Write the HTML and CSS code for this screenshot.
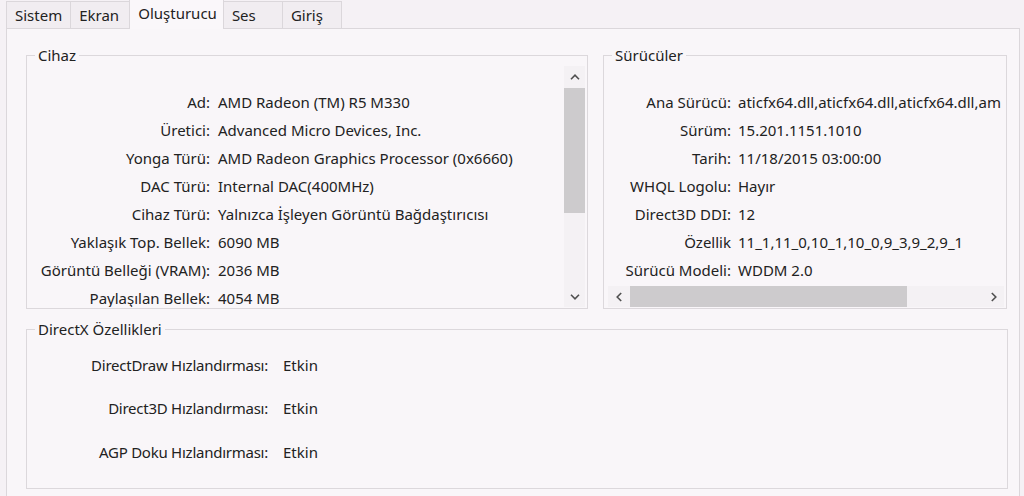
FILE: index.html
```html
<!DOCTYPE html>
<html lang="tr">

<head>
    <meta charset="UTF-8">
    <meta name="viewport" content="width=device-width, initial-scale=1.0">
    <title>DirectX Tanı Aracı</title>
    <link rel="stylesheet" href="styles.css">
</head>

<body>
    <div class="tabs">
        <div class="tab">Sistem</div>
        <div class="tab">Ekran</div>
        <div class="tab active">Oluşturucu</div>
        <div class="tab">Ses</div>
        <div class="tab">Giriş</div>
    </div>

    <div class="page">
        <div class="top-row">
            <fieldset class="group device">
                <legend>Cihaz</legend>
                <div class="scroll-box">
                    <div class="info-grid device-grid">
                        <span class="label">Ad:</span><span>AMD Radeon (TM) R5 M330</span>
                        <span class="label">Üretici:</span><span>Advanced Micro Devices, Inc.</span>
                        <span class="label">Yonga Türü:</span><span>AMD Radeon Graphics Processor (0x6660)</span>
                        <span class="label">DAC Türü:</span><span>Internal DAC(400MHz)</span>
                        <span class="label">Cihaz Türü:</span><span>Yalnızca İşleyen Görüntü Bağdaştırıcısı</span>
                        <span class="label">Yaklaşık Top. Bellek:</span><span>6090 MB</span>
                        <span class="label">Görüntü Belleği (VRAM):</span><span>2036 MB</span>
                        <span class="label">Paylaşılan Bellek:</span><span>4054 MB</span>
                    </div>
                    <div class="vscroll">
                        <div class="sb-btn">
                            <svg width="10" height="6" viewBox="0 0 10 6"><path d="M1 5.2 5 1.2 9 5.2" fill="none" stroke="#505050" stroke-width="1.6"/></svg>
                        </div>
                        <div class="vthumb"></div>
                        <div class="track"></div>
                        <div class="sb-btn">
                            <svg width="10" height="6" viewBox="0 0 10 6"><path d="M1 0.8 5 4.8 9 0.8" fill="none" stroke="#505050" stroke-width="1.6"/></svg>
                        </div>
                    </div>
                </div>
            </fieldset>

            <fieldset class="group drivers">
                <legend>Sürücüler</legend>
                <div class="scroll-box column">
                    <div class="info-grid driver-grid">
                        <span class="label">Ana Sürücü:</span><span>aticfx64.dll,aticfx64.dll,aticfx64.dll,am</span>
                        <span class="label">Sürüm:</span><span>15.201.1151.1010</span>
                        <span class="label">Tarih:</span><span>11/18/2015 03:00:00</span>
                        <span class="label">WHQL Logolu:</span><span>Hayır</span>
                        <span class="label">Direct3D DDI:</span><span>12</span>
                        <span class="label">Özellik</span><span>11_1,11_0,10_1,10_0,9_3,9_2,9_1</span>
                        <span class="label">Sürücü Modeli:</span><span>WDDM 2.0</span>
                    </div>
                    <div class="hscroll">
                        <div class="sb-btn">
                            <svg width="6" height="10" viewBox="0 0 6 10"><path d="M5.2 1 1.2 5 5.2 9" fill="none" stroke="#505050" stroke-width="1.6"/></svg>
                        </div>
                        <div class="hthumb"></div>
                        <div class="track"></div>
                        <div class="sb-btn">
                            <svg width="6" height="10" viewBox="0 0 6 10"><path d="M0.8 1 4.8 5 0.8 9" fill="none" stroke="#505050" stroke-width="1.6"/></svg>
                        </div>
                    </div>
                </div>
            </fieldset>
        </div>

        <fieldset class="group features">
            <legend>DirectX Özellikleri</legend>
            <div class="info-grid feature-grid">
                <span class="label">DirectDraw Hızlandırması:</span><span>Etkin</span>
                <span class="label">Direct3D Hızlandırması:</span><span>Etkin</span>
                <span class="label">AGP Doku Hızlandırması:</span><span>Etkin</span>
            </div>
        </fieldset>
    </div>
</body>
</html>
```

FILE: styles.css
```css
body {
    font-family: "Noto Sans", "Open Sans", sans-serif;
    font-size: 15px;
    color: #222;
    background-color: #f5f1f5;
    margin: 0;
    padding: 0;
    height: 496px;
    overflow: hidden;
}

.tabs {
    display: flex;
    align-items: flex-end;
    height: 28px;
    padding-left: 6px;
}

.tab {
    height: 26px;
    line-height: 26px;
    min-width: 42px;
    padding: 0 8px;
    margin-right: -1px;
    background-color: #f1edf1;
    border: 1px solid #dbd7db;
    border-bottom: none;
}

.tab.active {
    height: 29px;
    line-height: 26px;
    margin-bottom: -1px;
    padding: 0 6px 0 8px;
    background-color: #faf7fa;
    position: relative;
    z-index: 1;
}

.page {
    margin: 0 4px 0 6px;
    height: 451px;
    padding: 17px 11px 0 19px;
    background-color: #f9f6f9;
    border: 1px solid #dbd7db;
    border-bottom: none;
}

.top-row {
    display: flex;
    gap: 15px;
}

.group {
    margin: 0;
    padding: 2px 2px 1px 4px;
    border: 1px solid #dcd8dc;
    min-width: 0;
}

.group legend {
    padding: 0 3px;
    margin-left: 4px;
    line-height: 18px;
}

.device {
    width: 562px;
    box-sizing: border-box;
}

.drivers {
    width: 404px;
    box-sizing: border-box;
}

.scroll-box {
    display: flex;
    height: 241px;
    overflow: hidden;
}

.scroll-box.column {
    flex-direction: column;
}

.info-grid {
    display: grid;
    grid-auto-rows: 28px;
    align-items: center;
    white-space: nowrap;
}

.label {
    text-align: right;
}

.device-grid {
    flex: 1;
    padding-top: 22px;
    grid-template-columns: 179px auto;
    column-gap: 8px;
    align-content: start;
}

.driver-grid {
    flex: 1;
    padding-top: 22px;
    grid-template-columns: 123px auto;
    column-gap: 7px;
    align-content: start;
    overflow: hidden;
}

.vscroll {
    width: 21px;
    display: flex;
    flex-direction: column;
    background-color: #f4f1f4;
}

.sb-btn {
    width: 21px;
    height: 21px;
    display: flex;
    align-items: center;
    justify-content: center;
    flex-shrink: 0;
}

.vthumb {
    height: 125px;
    margin-top: 1px;
    background-color: #cdcbcd;
}

.track {
    flex: 1;
}

.hscroll {
    height: 21px;
    display: flex;
    margin-top: 2px;
    background-color: #f4f1f4;
}

.hthumb {
    width: 277px;
    margin-left: 1px;
    background-color: #cdcbcd;
}

.features {
    margin-top: 11px;
    width: 982px;
    box-sizing: border-box;
    padding: 5px 2px 14px 4px;
}

.feature-grid {
    grid-auto-rows: 43.5px;
    grid-template-columns: 237px auto;
    column-gap: 15px;
}

.feature-grid .label {
    letter-spacing: -0.25px;
}
```
